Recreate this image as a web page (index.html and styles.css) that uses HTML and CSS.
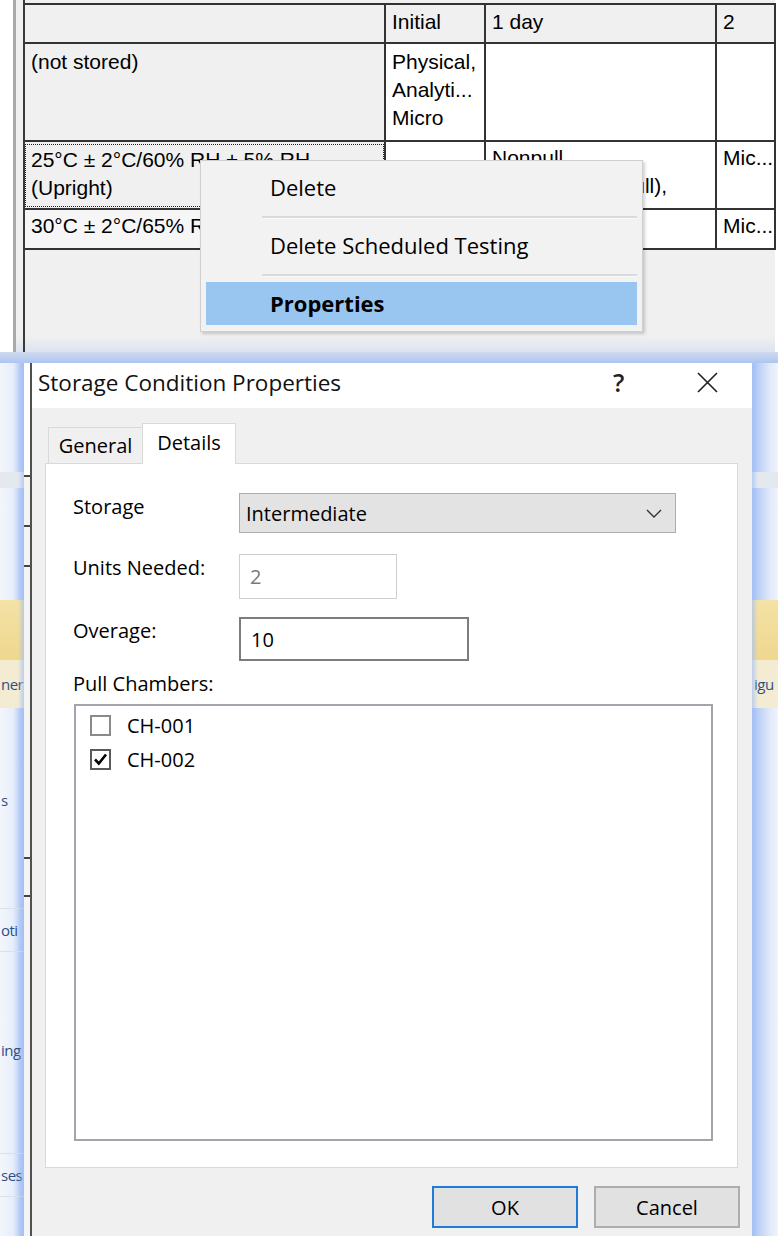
FILE: index.html
```html
<!DOCTYPE html>
<html>
<head>
<meta charset="utf-8">
<link rel="stylesheet" href="styles.css">
</head>
<body>
<div class="page">
  <div class="top">
    <div class="lw"></div>
    <div class="ll"></div>
    <div class="lg"></div>
    <div class="grid-area">
      <table class="grid">
        <colgroup>
          <col class="c1"><col class="c2"><col class="c3"><col class="c4">
        </colgroup>
        <tr class="hdr">
          <th></th><th>Initial</th><th>1 day</th><th>2</th>
        </tr>
        <tr class="r1">
          <td class="rh">(not stored)</td>
          <td>Physical,<br>Analyti...<br>Micro</td>
          <td></td>
          <td></td>
        </tr>
        <tr class="r2">
          <td class="rh focus"><div class="focus-box">25°C ± 2°C/60% RH ± 5% RH<br>(Upright)</div></td>
          <td></td>
          <td>Nonpull<br>Physical (Nonpull),</td>
          <td>Mic...</td>
        </tr>
        <tr class="r3">
          <td class="rh light">30°C ± 2°C/65% RH ± 5% RH</td>
          <td></td>
          <td></td>
          <td>Mic...</td>
        </tr>
      </table>
      <div class="menu">
        <div class="mi">Delete</div>
        <div class="msep"></div>
        <div class="mi">Delete Scheduled Testing</div>
        <div class="msep"></div>
        <div class="mi sel">Properties</div>
      </div>
    </div>
    <div class="rw"></div>
  </div>

  <div class="bottom">
    <div class="glow-top"></div>
    <div class="brow">
      <div class="bgl">
        <div class="b b1"></div>
        <div class="b b2"></div>
        <div class="b b3"></div>
        <div class="b b4"></div>
        <div class="b b5"><span>ner</span></div>
        <div class="b b6"></div>
        <div class="b b7"><span>s</span></div>
        <div class="b b8"></div>
        <div class="b b9"><span>oti</span></div>
        <div class="b b10"></div>
        <div class="b b11"><span>ing</span></div>
        <div class="b b12"></div>
        <div class="b b13"><span>ses</span></div>
        <div class="b b14"></div>
      </div>
      <div class="ustrip">
        <div class="u u1"></div>
        <div class="u u2"></div>
        <div class="u u3"></div>
        <div class="u u4"></div>
        <div class="u u5"></div>
      </div>
      <div class="uline"></div>
      <div class="dialog">
        <div class="titlebar">
          <div class="title">Storage Condition Properties</div>
          <div class="help">?</div>
          <svg class="close" width="21" height="21" viewBox="0 0 21 21"><path d="M1 1 L20 20 M20 1 L1 20" stroke="#1e1e1e" stroke-width="1.6" fill="none"/></svg>
        </div>
        <div class="dbody">
          <div class="tabs">
            <div class="tab">General</div>
            <div class="tab active">Details</div>
          </div>
          <div class="panel">
            <div class="frow r-storage">
              <div class="lbl">Storage</div>
              <div class="combo"><span>Intermediate</span>
                <svg width="16" height="9" viewBox="0 0 16 9"><path d="M1 1 L8 8 L15 1" stroke="#333" stroke-width="1.4" fill="none"/></svg>
              </div>
            </div>
            <div class="frow r-units">
              <div class="lbl">Units Needed:</div>
              <div class="tbox dis">2</div>
            </div>
            <div class="frow r-over">
              <div class="lbl">Overage:</div>
              <div class="tbox en">10</div>
            </div>
            <div class="lbl pull">Pull Chambers:</div>
            <div class="listbox">
              <div class="li"><span class="cb"></span><span>CH-001</span></div>
              <div class="li"><span class="cb on"><svg width="17" height="17" viewBox="0 0 17 17"><path d="M3 8.5 L6.8 12.5 L14 3.5" stroke="#000" stroke-width="2.6" fill="none"/></svg></span><span>CH-002</span></div>
            </div>
          </div>
          <div class="btns">
            <div class="btn ok">OK</div>
            <div class="btn">Cancel</div>
          </div>
        </div>
      </div>
      <div class="bgr">
        <div class="b b1"></div>
        <div class="b b2"></div>
        <div class="b b3"></div>
        <div class="b b4"></div>
        <div class="b b5"><span>igu</span></div>
        <div class="b b6"></div>
        <div class="b b8r"></div>
        <div class="b b14"></div>
      </div>
    </div>
  </div>
</div>
</body>
</html>
```
FILE: styles.css
```css
* { box-sizing: border-box; margin: 0; padding: 0; }
html, body { width: 778px; height: 1236px; overflow: hidden; background: #fff; }
body { font-family: "Liberation Sans", Arial, sans-serif; color: #000; }
.page { display: flex; flex-direction: column; width: 778px; height: 1236px; }

/* ---------- top screenshot: grid + context menu ---------- */
.top { display: grid; grid-template-columns: 13px 3px 7px 752px 3px; height: 352px; flex: none; }
.lw { background: #fff; }
.ll { background: #a9a9a9; }
.lg { background: linear-gradient(to bottom, #f0f0f0 0, #f0f0f0 336px, #dde3ee 352px); }
.rw { background: #fff; }
.grid-area {
  position: relative;
  border-left: 2px solid #3a3a3a;
  padding-top: 3px;
  background: linear-gradient(to bottom, #f0f0f0 0, #f0f0f0 336px, #dce3ef 352px);
}
.grid { border-collapse: collapse; table-layout: fixed; width: 750px; font-size: 21px; line-height: 28px; }
.grid col.c1 { width: 360px; }
.grid col.c2 { width: 100px; }
.grid col.c3 { width: 231px; }
.grid col.c4 { width: 59px; }
.grid th, .grid td {
  border: 2px solid #333;
  text-align: left;
  vertical-align: top;
  font-weight: normal;
  padding: 4px 6px 0 6px;
  background: #fff;
  white-space: nowrap;
  overflow: hidden;
}
.grid tr > :first-child { border-left: none; }
.grid th { background: #f0f0f0; padding-top: 3px; }
.grid tr.hdr { height: 39px; }
.grid tr.r1 { height: 98px; }
.grid tr.r2 { height: 68px; }
.grid tr.r3 { height: 40px; }
.grid tr.r2 td, .grid tr.r3 td { padding-top: 2px; }
.grid td.rh { background: #f0f0f0; }
.grid td.rh.light { background: #f6f6f6; }
.grid td.focus { padding: 0; }
.focus-box { border: 1px dotted #222; height: 63px; padding: 1px 5px 0 5px; }

.menu {
  position: absolute;
  left: 175px;
  top: 160px;
  width: 443px;
  height: 172px;
  background: #f2f2f2;
  border: 1px solid #cfcfcf;
  box-shadow: 2px 2px 3px rgba(0,0,0,0.18);
  padding: 5px 5px 0 5px;
  font-family: "Open Sans", "Noto Sans", sans-serif;
  font-size: 22px;
  color: #000;
}
.mi { height: 44px; line-height: 42px; padding-left: 64px; }
.mi.sel { background: #99c6f0; font-weight: bold; height: 43px; }
.msep { height: 14px; margin-left: 56px; display: flex; align-items: center; }
.msep::before { content: ""; display: block; width: 100%; height: 2px; background: #dadada; border-bottom: 1px solid #fafafa; }

/* ---------- bottom screenshot: dialog ---------- */
.bottom { flex: 1; display: flex; flex-direction: column; min-height: 0; }
.glow-top { height: 11px; flex: none; background: linear-gradient(to bottom, #cfdaee, #aec5f2); }
.brow { flex: 1; display: grid; grid-template-columns: 24px 6px 2px 720px 26px; min-height: 0; }

.bgl, .bgr { position: relative; display: flex; flex-direction: column; overflow: hidden;
  font-family: "Open Sans", sans-serif; font-size: 15px; letter-spacing: -0.5px; color: #2d4f86; }
.bgl { background: linear-gradient(to right, #f3f6fc 0, #e7eefb 55%, #b4cbf5 85%, #a6c0f5 100%); }
.bgr { background: linear-gradient(to right, #a6c0f5 0, #bcd0f6 25%, #e2eafa 70%, #f0f4fb 100%); }
.bgl::after, .bgr::after { content: ""; position: absolute; top: 0; bottom: 0; width: 6px; }
.bgl::after { right: 0; background: linear-gradient(to right, rgba(166,192,245,0), rgba(166,192,245,0.7)); }
.bgr::after { left: 0; background: linear-gradient(to left, rgba(166,192,245,0), rgba(166,192,245,0.7)); }
.b { flex: none; display: flex; align-items: center; white-space: nowrap; }
.bgl .b { justify-content: flex-start; padding-left: 1px; }
.bgr .b { justify-content: flex-start; padding-left: 2px; }
.b1 { height: 109px; }
.b2 { height: 16px; background: #e4e8ef; }
.b3 { height: 112px; }
.b4 { height: 60px; background: linear-gradient(to bottom, #f4e2a6, #efd78e); }
.b5 { height: 48px; background: #f3ecd3; }
.b6 { height: 72px; }
.b7 { height: 40px; }
.b8 { height: 88px; }
.b8r { height: 280px; }
.b9 { height: 44px; border-top: 1px solid #d9e0ec; border-bottom: 1px solid #d9e0ec; }
.b10 { height: 78px; }
.b11 { height: 40px; }
.b12 { height: 83px; }
.b13 { height: 44px; border-top: 1px solid #d9e0ec; border-bottom: 1px solid #d9e0ec; }
.b14 { flex: 1; }

.ustrip { display: flex; flex-direction: column; background: #f4f4f4; }
.u { flex: none; }
.u1 { height: 112px; background: #fff; }
.u2 { height: 52px; border-top: 2px solid #444; border-bottom: 2px solid #444; }
.u3 { height: 40px; border-bottom: 2px solid #444; }
.u4 { height: 290px; }
.u5 { height: 40px; border-top: 2px solid #444; border-bottom: 2px solid #444; }
.uline { background: #505050; }

.dialog { display: flex; flex-direction: column; background: #f0f0f0; font-family: "Open Sans", "Noto Sans", sans-serif; font-size: 20px; color: #000; min-height: 0; overflow: hidden; }
.titlebar { height: 45px; flex: none; background: #fff; display: flex; align-items: center; padding: 0 0 6px 6px; }
.title { flex: 1; font-size: 22.5px; color: #111; }
.help { font-size: 25px; font-weight: 600; color: #222; width: 14px; margin-right: 70px; line-height: 1; }
.close { margin-right: 34px; display: block; }

.dbody { flex: 1; padding: 13px 14px 0 13px; display: flex; flex-direction: column; }
.tabs { height: 42px; display: flex; align-items: flex-end; padding-left: 3px; position: relative; z-index: 1; }
.tab { height: 36px; width: 95px; border: 1px solid #d9d9d9; border-bottom: none; background: #f0f0f0; display: flex; align-items: center; justify-content: center; font-size: 20px; }
.tab.active { height: 41px; width: 94px; background: #fff; margin-bottom: -1px; margin-left: -1px; padding-bottom: 4px; }
.panel { height: 705px; background: #fff; border: 1px solid #d9d9d9; padding: 29px 0 0 27px; display: flex; flex-direction: column; }

.frow { display: flex; align-items: flex-start; }
.lbl { width: 166px; line-height: 28px; flex: none; }
.r-units { margin-top: 21px; }
.r-over { margin-top: 18px; }
.combo { width: 437px; height: 40px; background: #e3e3e3; border: 1px solid #adadad; display: flex; align-items: center; justify-content: space-between; padding: 0 13px 0 6px; }
.tbox { height: 45px; background: #fff; display: flex; align-items: center; padding-left: 10px; }
.tbox.dis { width: 158px; border: 1px solid #cfcfcf; color: #7a7a7a; }
.tbox.en { width: 230px; height: 44px; border: 2px solid #7d7d7d; padding-left: 10px; }
.pull { margin-top: 9px; }
.listbox { margin-top: 6px; margin-left: 1px; width: 639px; height: 437px; border: 2px solid #a2a5ac; padding: 2px 0 0 14px; }
.li { height: 34px; display: flex; align-items: center; }
.cb { width: 21px; height: 21px; border: 2px solid #8a8a8a; background: #fff; margin-right: 16px; display: flex; align-items: center; justify-content: center; }
.cb.on { border-color: #5a5a5a; }

.btns { margin-top: 18px; margin-right: -2px; display: flex; justify-content: flex-end; gap: 16px; }
.btn { width: 146px; height: 42px; background: #e1e1e1; border: 2px solid #adadad; display: flex; align-items: center; justify-content: center; }
.btn.ok { border-color: #1f7bd6; }
```
